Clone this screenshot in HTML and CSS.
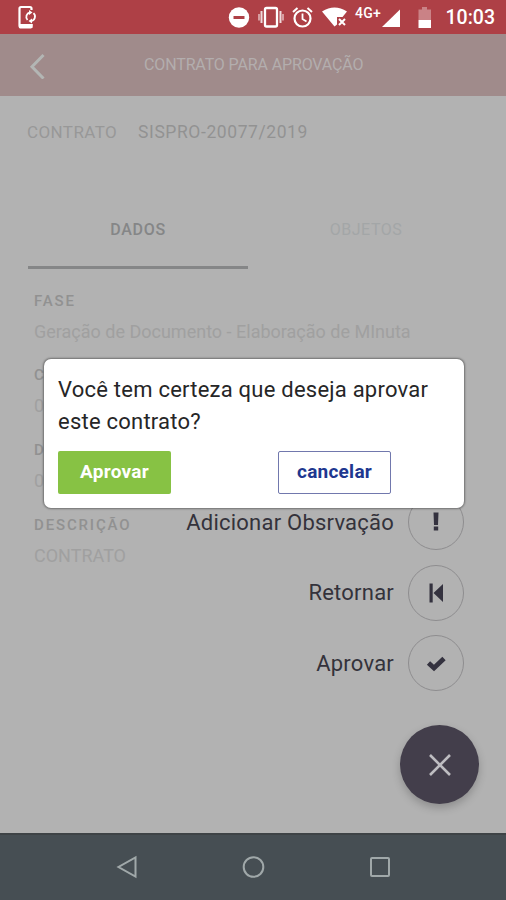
FILE: index.html
```html
<!DOCTYPE html>
<html lang="pt-BR">
<head>
<meta charset="utf-8">
<title>Contrato para aprovação</title>
<link rel="stylesheet" href="styles.css">
</head>
<body>
<div class="phone">
  <div class="status">
    <svg class="status-icons" width="506" height="34" viewBox="0 0 506 34" fill="none" stroke="#fff">
      <path d="M31.500 10V8.500Q31.500 7 30 7H21Q19.500 7 19.500 8.500V25.500Q19.500 27.500 21 27.500H30Q31.500 27.500 31.500 25.500V24" stroke-width="2.200"/>
      <path d="M19 24H32.500V28H19z" fill="#fff" stroke="none"/>
      <path d="M30 12.500A4.500 4.500 0 0 0 27.500 20M31 21A4.500 4.500 0 0 0 33.500 13.200" stroke-width="1.800"/>
      <path d="M29 10L32.500 12.500L29 15ZM32 18.500L28.500 21L32 23.500Z" fill="#fff" stroke="none"/>
      <circle cx="239" cy="17.500" r="10.200" fill="#fff" stroke="none"/>
      <path d="M233.500 17.500H244.500" stroke="#ae4046" stroke-width="3"/>
      <rect x="265" y="8" width="12" height="18.500" rx="1.500" stroke-width="2.300"/>
      <path d="M261.500 11V23M280.500 11V23" stroke-width="2" opacity=".8"/>
      <path d="M259 14V20.500M283 14V20.500" stroke-width="1.500" opacity=".65"/>
      <circle cx="302.500" cy="18.500" r="8" stroke-width="2.200"/>
      <path d="M302.500 13.500V19L306.500 21.500" stroke-width="1.800"/>
      <path d="M293 12L297.500 8M312 12L307.500 8" stroke-width="2"/>
      <path d="M322 11.500Q334.500 3.500 347 11.500L342.500 17H337V24.500L334.500 26.500Z" fill="#fff" stroke="none"/>
      <path d="M339 19L345 25M345 19L339 25" stroke-width="2"/>
      <path d="M400 9.500V27H382Z" fill="#fff" stroke="none"/>
      <path d="M422 7H427V9.500H431V20H418.500V9.500H422Z" fill="#fff" stroke="none" opacity=".35"/>
      <path d="M418.500 20H431V28H418.500Z" fill="#fff" stroke="none"/>
    </svg>
    <span class="network">4G+</span>
    <span class="clock">10:03</span>
  </div>
  <header class="header">
    <svg class="back" width="18" height="26" viewBox="0 0 18 26" fill="none" stroke="#b3b6b4" stroke-width="3"><path d="M14.500 2L3 13.800L14.500 25.500"/></svg>
    <h1 class="title">CONTRATO PARA APROVAÇÃO</h1>
  </header>
  <main class="content">
    <div class="contract"><span class="contract-label">CONTRATO</span><span class="contract-code">SISPRO-20077/2019</span></div>
    <div class="tabs">
      <div class="tab active">DADOS</div>
      <div class="tab">OBJETOS</div>
    </div>
    <dl class="fields">
      <div class="field"><dt>FASE</dt><dd>Geração de Documento - Elaboração de MInuta</dd></div>
      <div class="field"><dt>C</dt><dd>0</dd></div>
      <div class="field"><dt>D</dt><dd>0</dd></div>
      <div class="field"><dt>DESCRIÇÃO</dt><dd>CONTRATO</dd></div>
    </dl>
  </main>
  <nav class="nav">
    <svg width="24" height="24" viewBox="0 0 24 24"><path d="M20.500 2.500V21.500L3.500 12Z"/></svg>
    <svg width="24" height="24" viewBox="0 0 24 24"><circle cx="11.500" cy="12" r="9.800"/></svg>
    <svg width="24" height="24" viewBox="0 0 24 24"><rect x="3" y="3" width="18" height="18" rx="1"/></svg>
  </nav>
  <div class="actions">
    <div class="action"><span>Adicionar Obsrvação</span><i class="round"><svg width="24" height="24" viewBox="0 0 24 24"><path d="M9.500 2.500H14.500L14 15H10ZM9.800 16.500H14.200V20.500H9.800Z"/></svg></i></div>
    <div class="action"><span>Retornar</span><i class="round"><svg width="24" height="24" viewBox="0 0 24 24"><path d="M5.500 2.500H8.700V21.500H5.500ZM19 3V21L9.500 12Z"/></svg></i></div>
    <div class="action"><span>Aprovar</span><i class="round"><svg width="24" height="24" viewBox="0 0 24 24"><path d="M4.500 12L10 17L20 7.500" fill="none" stroke="#34323f" stroke-width="4.800"/></svg></i></div>
    <div class="fab"><svg width="24" height="24" viewBox="0 0 24 24"><path d="M2 2L22 22M22 2L2 22"/></svg></div>
  </div>
  <div class="dialog">
    <p class="question">Você tem certeza que deseja aprovar<br>este contrato?</p>
    <div class="buttons"><button class="btn approve">Aprovar</button><button class="btn cancel">cancelar</button></div>
  </div>
</div>
</body>
</html>
```
FILE: styles.css
```css
* { box-sizing: border-box; }
body { margin: 0; font-family: Roboto, "Liberation Sans", sans-serif; }
.phone { position: relative; display: flex; flex-direction: column; width: 506px; height: 900px; overflow: hidden; background: #b2b2b2; }
.status { position: relative; flex: none; height: 34px; background: #ae4046; color: #fff; }
.status-icons { display: block; }
.network { position: absolute; left: 355px; top: 5px; font-size: 14px; line-height: 16px; font-weight: 500; letter-spacing: .3px; }
.clock { position: absolute; right: 11px; top: 6px; font-size: 19.500px; line-height: 24px; font-weight: 500; }
.header { display: flex; flex: none; align-items: center; height: 62px; padding-left: 29px; background: #a08b8b; }
.back { flex: none; margin-top: 2px; }
.title { margin: 0 0 0 97px; font-size: 16px; line-height: 20px; font-weight: 400; letter-spacing: -.13px; color: #b3aeae; white-space: nowrap; }
.content { flex: 1; padding-top: 25px; color: #989898; }
.contract { display: flex; align-items: baseline; padding-left: 27px; gap: 21px; font-size: 17px; line-height: 22px; letter-spacing: .4px; }
.contract-code { font-size: 17.500px; letter-spacing: .58px; color: #929292; }
.tabs { display: grid; grid-template-columns: 220px 220px; gap: 8px; margin: 60px 28px 0; }
.tab { height: 66px; padding-top: 16px; text-align: center; font-size: 16px; line-height: 22px; letter-spacing: .55px; color: #a3a6a7; }
.active { border-bottom: 3px solid #858687; font-weight: 500; letter-spacing: .7px; color: #858687; }
.fields { margin: 20.500px 0 0 34px; }
.field { height: 74.700px; }
.field dt { font-size: 15px; line-height: 22px; font-weight: 500; letter-spacing: 1.850px; color: #919191; }
.field dd { margin: 9px 0 0; font-size: 18px; line-height: 22px; color: #a0a0a0; white-space: nowrap; }
.nav { display: flex; flex: none; justify-content: space-between; height: 67px; padding: 20px 114px 0 115px; border-top: 2px solid #3e4346; background: #464e53; }
.nav svg { fill: none; stroke: #a0a8a9; stroke-width: 2; }
.actions { position: absolute; right: 27px; top: 494px; width: 300px; }
.action { display: flex; align-items: center; justify-content: flex-end; height: 56px; margin: 0 15px 14.500px 0; gap: 14px; font-size: 22px; letter-spacing: .22px; color: #34323b; white-space: nowrap; }
.round { display: grid; place-items: center; width: 56px; height: 56px; border: 1.500px solid #8e8d8f; border-radius: 50%; }
.round svg { fill: #34323f; }
.fab { display: grid; place-items: center; width: 79px; height: 79px; margin: 34px 0 0 auto; border-radius: 50%; background: #433e4b; box-shadow: 0 4px 8px #00000035; }
.fab svg { fill: none; stroke: #bebdc1; stroke-width: 2.600; }
.dialog { position: absolute; left: 44px; top: 359px; width: 420px; height: 149px; padding: 15px 14px 14px; border-radius: 7px; background: #fff; box-shadow: 0 0 2px 1px #00000060; }
.question { margin: 0; font-size: 22px; line-height: 32px; letter-spacing: .23px; color: #262627; white-space: nowrap; }
.buttons { display: flex; gap: 107px; margin-top: 13px; }
.btn { width: 113px; height: 43px; padding: 0 0 2px; border: 0; border-radius: 2px; font: 700 19px Roboto, sans-serif; letter-spacing: .25px; }
.approve { background: #87c244; color: #fff; }
.cancel { border: 1.500px solid #7178ad; background: #fff; color: #20378f; }
```
